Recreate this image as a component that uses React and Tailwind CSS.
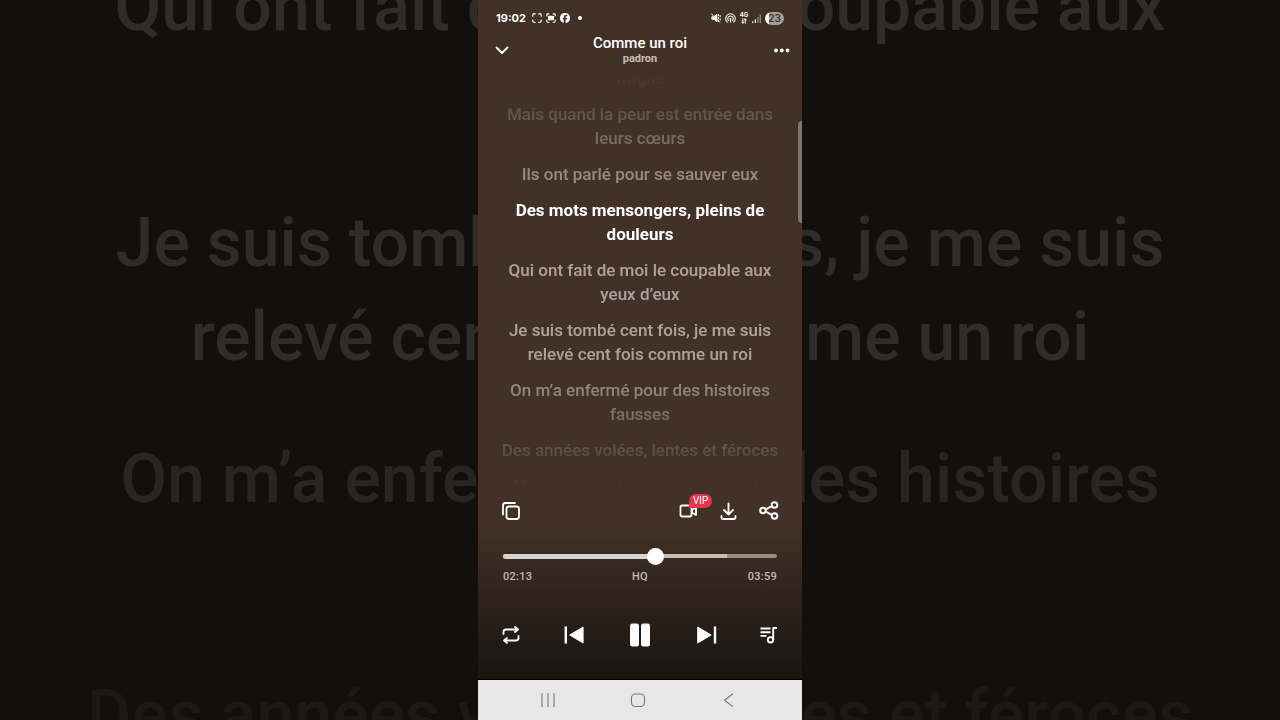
import React from 'react'

const lyrics = [
  { text: 'fragile' },
  { text: 'Mais quand la peur est entrée dans leurs cœurs' },
  { text: 'Ils ont parlé pour se sauver eux' },
  { text: 'Des mots mensongers, pleins de douleurs', current: true },
  { text: 'Qui ont fait de moi le coupable aux yeux d’eux' },
  { text: 'Je suis tombé cent fois, je me suis relevé cent fois comme un roi' },
  { text: 'On m’a enfermé pour des histoires fausses' },
  { text: 'Des années volées, lentes et féroces' },
  { text: 'Mais derrière les murs, gardant la' },
]

const duration = 239
const position = 133
const buffered = 195

function Icon({ className = 'size-6', children, ...props }) {
  return (
    <svg
      viewBox="0 0 24 24"
      className={className}
      fill="none"
      stroke="currentColor"
      strokeWidth="1.8"
      strokeLinecap="round"
      strokeLinejoin="round"
      aria-hidden="true"
      {...props}
    >
      {children}
    </svg>
  )
}

function IconButton({ label, className = 'w-6', children }) {
  return (
    <button type="button" aria-label={label} className={`relative flex h-6 shrink-0 items-center justify-center ${className}`}>
      {children}
    </button>
  )
}

function Backdrop() {
  return (
    <div aria-hidden="true" className="absolute inset-0 overflow-hidden">
      <div className="-mt-10 flex flex-col gap-12 text-center text-[68px] leading-[94px] font-medium text-[#302c29]">
        <p>Qui ont fait de moi le coupable aux<br />yeux d’eux</p>
        <p>Je suis tombé cent fois, je me suis<br />relevé cent fois comme un roi</p>
        <p className="text-[#292522]">On m’a enfermé pour des histoires<br />fausses</p>
        <p className="text-[#1d1815]">Des années volées, lentes et féroces</p>
      </div>
    </div>
  )
}

function StatusBar() {
  return (
    <div className="flex h-[34px] items-center justify-between px-[18px] pt-0.5 text-white">
      <div className="flex items-center gap-1">
        <span className="mr-0.5 font-[Inter] text-[11px] font-bold">19:02</span>
        <Icon className="size-[10px]" strokeWidth="2.6">
          <path d="M2 8V4q0-2 2-2h4M16 2h4q2 0 2 2v4M22 16v4q0 2-2 2h-4M8 22H4q-2 0-2-2v-4" />
        </Icon>
        <Icon className="size-[10px]" strokeWidth="2.6">
          <path d="M2 7V4q0-2 2-2h3M17 2h3q2 0 2 2v3M22 17v3q0 2-2 2h-3M7 22H4q-2 0-2-2v-3" />
          <path d="M6 8h8v2l4-2v8l-4-2v2H6z" fill="currentColor" />
        </Icon>
        <Icon className="size-[10px]" stroke="none">
          <path
            fill="currentColor"
            d="M24 12a12 12 0 1 0-14.9 11.6v-8H6.6V12h2.5v-1.6c0-4.1 1.9-6 5.9-6 .8 0 2.1.1 2.6.3v3.3h-1.4c-2 0-2.7.7-2.7 2.6V12h3.9l-.7 3.6h-3.2v8.3A12 12 0 0 0 24 12z"
          />
        </Icon>
        <span className="ml-1 size-1 rounded-full bg-white" />
      </div>
      <div className="flex items-center gap-1">
        <Icon className="size-[10px]" strokeWidth="2.4">
          <path d="M3 9h4l7-6v18l-7-6H3z" fill="currentColor" />
          <path d="M18 4v3M18 11v3M18 18v3M22 6v3M22 14v3M1 2l20 20" />
        </Icon>
        <Icon className="size-[11px]" strokeWidth="2.2">
          <path d="M5 20a10.500 10.500 0 1 1 14 0M8 17a6 6 0 1 1 8 0" />
          <circle cx="12" cy="13" r="2" fill="currentColor" stroke="none" />
          <path d="M12 14v6" />
        </Icon>
        <span className="flex w-2 flex-col items-center">
          <span className="font-[Inter] text-[6px] leading-[6px] font-bold">4G</span>
          <Icon className="size-[6px]" strokeWidth="4">
            <path d="M7 3v17M3 16l4 5 4-5M17 21V4M13 8l4-5 4 5" />
          </Icon>
        </span>
        <Icon className="size-[9px]" strokeWidth="3" strokeLinecap="butt">
          <path d="M2 24v-5M9 24V14" />
          <path d="M16 24V8M22 24V1" opacity=".5" />
        </Icon>
        <span className="flex h-[13px] w-[19px] items-center justify-center rounded-full bg-linear-to-r from-white from-23% to-[#a59d97] to-23% font-[Inter] text-[10px] leading-none font-semibold text-[#423126]">
          23
        </span>
      </div>
    </div>
  )
}

function Header() {
  return (
    <header className="flex h-8 items-center justify-between px-3">
      <IconButton label="Fermer">
        <Icon strokeWidth="1.9"><path d="M6.500 9.500L12 15l5.500-5.500" /></Icon>
      </IconButton>
      <div className="text-center">
        <h1 className="text-[15px] leading-[18px] font-medium">Comme un roi</h1>
        <p className="text-[11px] leading-[14px] font-bold text-[#c6beb8]">padron</p>
      </div>
      <IconButton label="Plus d’options">
        <Icon className="ml-2 size-4 shrink-0" viewBox="0 0 16 16" stroke="none">
          <g fill="currentColor">
            <circle cx="2" cy="8.500" r="1.900" />
            <circle cx="7.800" cy="8.500" r="1.900" />
            <circle cx="13.600" cy="8.500" r="1.900" />
          </g>
        </Icon>
      </IconButton>
    </header>
  )
}

function Lyrics() {
  return (
    <section className="min-h-0 flex-1 overflow-hidden mask-[linear-gradient(transparent_2%,black_32%,black_68%,transparent_99%)]">
      <div className="flex flex-col gap-3 px-5 text-center text-[17px] leading-6 font-medium text-white/55">
        {lyrics.map((line) => (
          <p key={line.text} className={line.current ? 'font-bold text-white' : ''}>{line.text}</p>
        ))}
      </div>
    </section>
  )
}

function Actions() {
  return (
    <div className="mt-2 flex items-center gap-4 px-[21px]">
      <IconButton label="Copier">
        <Icon>
          <rect x="7.500" y="7.500" width="12.500" height="12.500" rx="2.500" />
          <path d="M4 15.500V6.500Q4 4 6.500 4h9.500" />
        </Icon>
      </IconButton>
      <span className="flex-1" />
      <IconButton label="Vidéo VIP">
        <Icon>
          <rect x="3.500" y="6.500" width="11" height="11" rx="1.800" />
          <path d="M15 11l4-2.500v7.500l-4-2.500z" />
        </Icon>
        <span className="absolute -top-[5px] left-3 rounded-full rounded-bl-md bg-[#e5344b] px-1 text-[10px] leading-[14px]">VIP</span>
      </IconButton>
      <IconButton label="Télécharger">
        <Icon strokeWidth="1.900">
          <path d="M11.500 4.500V15M7 11l4.500 4.500L16 11M4.500 17v1.500Q4.500 20 6 20h11q1.500 0 1.500-1.500V17" />
        </Icon>
      </IconButton>
      <IconButton label="Partager">
        <Icon strokeWidth="2">
          <circle cx="6" cy="11.500" r="2.800" />
          <circle cx="17.500" cy="6" r="2.800" />
          <circle cx="17.500" cy="17" r="2.800" />
          <path d="M8.500 10.300l6.500-3.100M8.500 12.700l6.500 3.100" />
        </Icon>
      </IconButton>
    </div>
  )
}

function Progress() {
  return (
    <div className="mt-[23px] px-[25px]">
      <div className="relative flex h-5 items-center">
        <div className="h-1 w-full overflow-hidden rounded-full bg-[#9a8e88]">
          <div className="h-full bg-[#c9beb7]" style={{ width: `${(buffered / duration) * 100}%` }} />
        </div>
        <div className="absolute left-0 h-[5px] rounded-full bg-[#dcd5cf]" style={{ width: `${(position / duration) * 100}%` }} />
        <input
          type="range"
          aria-label="Position de lecture"
          min="0"
          max={duration}
          defaultValue={position}
          className="absolute -inset-x-2 inset-y-0 appearance-none bg-transparent [&::-webkit-slider-thumb]:size-[17px] [&::-webkit-slider-thumb]:appearance-none [&::-webkit-slider-thumb]:rounded-full [&::-webkit-slider-thumb]:bg-white"
        />
      </div>
      <div className="mt-1 grid grid-cols-3 text-[11px] leading-[14px] font-medium tracking-wide text-[#c4bbb3]">
        <span>02:13</span>
        <span className="text-center">HQ</span>
        <span className="text-right">03:59</span>
      </div>
    </div>
  )
}

function Controls() {
  return (
    <div className="mt-[7px] flex h-[88px] items-center justify-between px-[21px]">
      <IconButton label="Répéter">
        <Icon>
          <path d="M4.500 11V9q0-2.500 2.500-2.500H19M16 4l3 2.500L16 9M19.500 13v2q0 2.500-2.500 2.500H5M8 15l-3 2.500L8 20" />
        </Icon>
      </IconButton>
      <IconButton label="Précédent">
        <Icon strokeWidth="2.400" strokeLinecap="butt">
          <path d="M3.800 3.500v17" />
          <path d="M8 12L21 4.300v15.400z" fill="currentColor" strokeWidth="1.200" />
        </Icon>
      </IconButton>
      <IconButton label="Pause" className="w-8">
        <Icon stroke="none">
          <rect x="2" y=".500" width="9" height="23" rx="2.500" fill="currentColor" />
          <rect x="13" y=".500" width="9" height="23" rx="2.500" fill="currentColor" />
        </Icon>
      </IconButton>
      <IconButton label="Suivant">
        <Icon strokeWidth="2.400" strokeLinecap="butt">
          <path d="M20 3.500v17" />
          <path d="M15.800 12L2.800 4.300v15.400z" fill="currentColor" strokeWidth="1.200" />
        </Icon>
      </IconButton>
      <IconButton label="File d’attente">
        <Icon strokeWidth="1.900" strokeLinecap="butt">
          <path d="M3.500 5.500h10M3.500 9.200h10M3.500 12.900h6M20 5h-3.800v12" />
          <circle cx="13.500" cy="16.800" r="2.700" />
        </Icon>
      </IconButton>
    </div>
  )
}

function NavBar() {
  return (
    <nav className="flex h-[41px] items-center justify-between border-t border-black bg-[#e8e7e8] pr-15 pl-14 text-[#77757a]">
      <IconButton label="Applications récentes" className="w-7">
        <Icon strokeWidth="1.100"><path d="M6 5.500v13M12 5.500v13M18 5.500v13" /></Icon>
      </IconButton>
      <IconButton label="Accueil" className="w-7">
        <Icon strokeWidth="1.100"><rect x="5.500" y="6" width="13" height="12.500" rx="4" /></Icon>
      </IconButton>
      <IconButton label="Retour" className="w-7">
        <Icon strokeWidth="1.100"><path d="M16.500 6l-8 6.200 8 6.200" /></Icon>
      </IconButton>
    </nav>
  )
}

export default function App() {
  return (
    <div className="relative flex h-screen justify-center overflow-hidden bg-[#130f0c] font-[Roboto,sans-serif]">
      <Backdrop />
      <main className="relative flex aspect-[9/20] h-full flex-col bg-linear-to-b from-[#423126] from-73% to-[#1a1511] to-94% text-white">
        <StatusBar />
        <Header />
        <Lyrics />
        <Actions />
        <Progress />
        <Controls />
        <NavBar />
        <div className="absolute top-[121px] right-0 h-[102px] w-1 rounded-l-sm bg-[#80766e]" />
      </main>
    </div>
  )
}
